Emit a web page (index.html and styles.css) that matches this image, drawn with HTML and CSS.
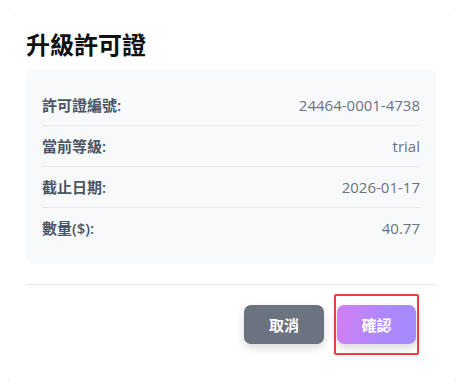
FILE: index.html
```html
<!DOCTYPE html>
<html lang="zh-Hant">

<head>
    <meta charset="utf-8">
    <title>升級許可證</title>
    <link rel="stylesheet" href="styles.css">
</head>

<body>

    <!--dialog start-->
    <div class="dialog">
        <h2 class="title">升級許可證</h2>

        <div class="info">
            <div class="row">
                <span class="label">許可證編號:</span>
                <span class="value">24464-0001-4738</span>
            </div>
            <div class="row">
                <span class="label">當前等級:</span>
                <span class="value">trial</span>
            </div>
            <div class="row">
                <span class="label">截止日期:</span>
                <span class="value">2026-01-17</span>
            </div>
            <div class="row">
                <span class="label">數量($):</span>
                <span class="value">40.77</span>
            </div>
        </div>

        <div class="footer">
            <button class="btn btn-cancel">取消</button>
            <div class="highlight">
                <button class="btn btn-ok">確認</button>
            </div>
        </div>
    </div>
    <!--dialog end-->

</body>

</html>
```

FILE: styles.css
```css
* {
    margin: 0;
    padding: 0;
    box-sizing: border-box;
}

body {
    margin: 8px;
    font-family: "Open Sans", "Noto Sans CJK TC", sans-serif;
    background: #fff;
}

.dialog {
    height: 374px;
    background: #fff;
    border-radius: 4px;
    box-shadow: 0 2px 12px rgba(0, 0, 0, 0.16);
    padding: 18px 20px 0 18px;
}

.title {
    font-family: "Noto Sans CJK TC", sans-serif;
    font-size: 24px;
    font-weight: 700;
    line-height: 36px;
    color: #111;
    margin-bottom: 7px;
}

.info {
    background: #f8f9fb;
    border-radius: 8px;
    padding: 16px;
}

.row {
    display: flex;
    justify-content: space-between;
    align-items: center;
    height: 40px;
    font-size: 15px;
    line-height: 20px;
}

.row:not(:last-child) {
    border-bottom: 1px solid #e5e7eb;
    height: 41px;
}

.label {
    color: #4b5563;
    font-weight: 600;
}

.value {
    color: #6b7280;
}

.footer {
    margin-top: 20px;
    border-top: 1px solid #e5e7eb;
    padding: 20px 20px 0 0;
    display: flex;
    justify-content: flex-end;
    align-items: center;
    gap: 13px;
}

.btn {
    width: 80px;
    height: 39px;
    border: none;
    border-radius: 7px;
    font-family: "Noto Sans CJK TC", sans-serif;
    font-size: 15px;
    font-weight: 700;
    color: #fff;
    box-shadow: 0 4px 10px rgba(0, 0, 0, 0.15);
}

.btn-cancel {
    background: #6b7280;
}

.btn-ok {
    width: 79px;
    background: linear-gradient(100deg, #d47ff3, #ad88fc 55%, #a48bfd);
}

.highlight {
    position: relative;
}

.highlight::after {
    content: "";
    position: absolute;
    left: -3px;
    right: -3px;
    top: -11px;
    bottom: -11px;
    border: 2px solid #f23b3b;
    border-radius: 2px;
}
```
